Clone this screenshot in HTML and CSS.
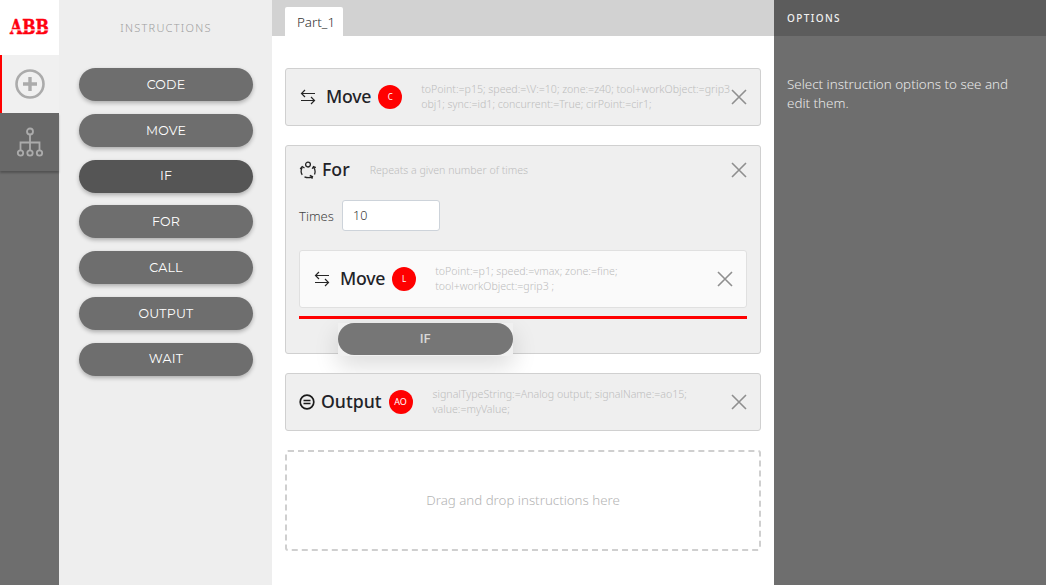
FILE: index.html
```html
<!DOCTYPE html>
<html lang="en">
<head>
<meta charset="utf-8">
<title>Instructions</title>
<link rel="stylesheet" href="styles.css">
</head>
<body>
<div class="app">
  <nav class="rail">
    <div class="logo"><span class="logo-text">ABB</span></div>
    <div class="rail-tab rail-active">
      <svg width="32" height="32" viewBox="0 0 32 32" fill="none" stroke="#ababab"><circle cx="16" cy="16" r="13.5" stroke-width="2.6"/><path d="M16 9v14M9 16h14" stroke-width="3.4"/></svg>
    </div>
    <div class="rail-tab rail-idle">
      <svg width="30" height="32" viewBox="0 0 30 32" fill="none" stroke="#ababab" stroke-width="1.8"><circle cx="15" cy="5.5" r="3"/><path d="M15 8.5v8M5.5 24.5v-8h19v8M15 16.5v8"/><circle cx="5.5" cy="27" r="2.7"/><circle cx="15" cy="27" r="2.7"/><circle cx="24.5" cy="27" r="2.7"/></svg>
    </div>
  </nav>

  <aside class="palette">
    <h2 class="palette-title">INSTRUCTIONS</h2>
    <div class="palette-list">
      <button class="pill">CODE</button>
      <button class="pill">MOVE</button>
      <button class="pill pill-dark">IF</button>
      <button class="pill">FOR</button>
      <button class="pill">CALL</button>
      <button class="pill">OUTPUT</button>
      <button class="pill">WAIT</button>
    </div>
  </aside>

  <main class="editor">
    <div class="tabbar"><div class="tab">Part_1</div></div>
    <div class="flow">
      <section class="card">
        <div class="row">
          <svg class="ico ico-move" width="16" height="16" viewBox="0 0 16 16" fill="none" stroke="#262626" stroke-width="1.2"><path d="M15 4.500H1.500M5 1L1.500 4.500 5 8M1 11.500h13.500M11 8l3.500 3.500L11 15"/></svg>
          <span class="name name-move">Move</span>
          <span class="badge">C</span>
          <p class="params">toPoint:=p15; speed:=\V:=10; zone:=z40; tool+workObject:=grip3<br>obj1; sync:=id1; concurrent:=True; cirPoint:=cir1;</p>
          <svg class="close" width="16" height="16" viewBox="0 0 16 16" stroke="#8f8f8f" stroke-width="1.6"><path d="M1 1l14 14M15 1L1 15"/></svg>
        </div>
      </section>

      <section class="card card-for">
        <div class="for-head">
          <svg class="ico ico-for" width="18" height="18" viewBox="0 0 18 18" fill="none" stroke="#262626" stroke-width="1.3"><circle cx="9" cy="3.600" r="2.400"/><path d="M3.200 6.500C1.800 9 2 12 3.200 13.800M1.200 8L3.200 5.500 5.500 7M5.500 15.800C8 17 10.500 17 13 15.800M10.800 14.300L13.500 15.600 12.800 17.800M15.500 13.500C16.500 11 16.300 8.500 14.500 6.200M13.200 7.800L14.500 5.500 16.800 6.600"/></svg>
          <span class="name">For</span>
          <span class="for-desc">Repeats a given number of times</span>
          <svg class="close" width="16" height="16" viewBox="0 0 16 16" stroke="#8f8f8f" stroke-width="1.6"><path d="M1 1l14 14M15 1L1 15"/></svg>
        </div>
        <div class="times">
          <label class="times-label">Times</label>
          <div class="times-input">10</div>
        </div>
        <div class="card card-inner">
          <div class="row">
            <svg class="ico ico-move" width="16" height="16" viewBox="0 0 16 16" fill="none" stroke="#262626" stroke-width="1.2"><path d="M15 4.500H1.500M5 1L1.500 4.500 5 8M1 11.500h13.500M11 8l3.500 3.500L11 15"/></svg>
            <span class="name name-move">Move</span>
            <span class="badge">L</span>
            <p class="params">toPoint:=p1; speed:=vmax; zone:=fine;<br>tool+workObject:=grip3 ;</p>
            <svg class="close" width="16" height="16" viewBox="0 0 16 16" stroke="#8f8f8f" stroke-width="1.6"><path d="M1 1l14 14M15 1L1 15"/></svg>
          </div>
        </div>
        <div class="drop-line"></div>
        <div class="ghost"><div class="pill ghost-pill">IF</div></div>
      </section>

      <section class="card">
        <div class="row">
          <svg class="ico ico-out" width="16" height="16" viewBox="0 0 16 16" fill="none" stroke="#1a1a1a"><circle cx="8" cy="8" r="6.800" stroke-width="1.700"/><path d="M4.500 6.500h7M4.500 9.500h7" stroke-width="1.500"/></svg>
          <span class="name">Output</span>
          <span class="badge badge-ao">AO</span>
          <p class="params params-wide">signalTypeString:=Analog output; signalName:=ao15;<br>value:=myValue;</p>
          <svg class="close" width="16" height="16" viewBox="0 0 16 16" stroke="#8f8f8f" stroke-width="1.6"><path d="M1 1l14 14M15 1L1 15"/></svg>
        </div>
      </section>

      <div class="dropzone">Drag and drop instructions here</div>
    </div>
  </main>

  <aside class="options">
    <div class="options-head">OPTIONS</div>
    <p class="options-text">Select instruction options to see and edit them.</p>
  </aside>
</div>
</body>
</html>
```
FILE: styles.css
```css
* { box-sizing: border-box; }
html, body { margin: 0; height: 100%; overflow: hidden; }
body { font-family: "Noto Sans", "Open Sans", sans-serif; color: #262626; }
.app { display: flex; width: 1046px; height: 585px; }

.rail { width: 59px; background: #6e6e6e; flex: none; }
.logo { height: 55px; background: #fff; display: flex; align-items: center; justify-content: center; }
.logo-text { position: relative; display: inline-block; font-family: "DejaVu Serif", serif; font-weight: 700; font-size: 15.8px; line-height: 16px; color: #ff000f; -webkit-text-stroke: 0.4px #ff000f; transform: scaleY(1.25); margin-top: 1px; }
.logo-text::after { content: ""; position: absolute; inset: 0; background: linear-gradient(rgba(255,255,255,.8), rgba(255,255,255,.8)) 0 8.5px / 100% 1px no-repeat; }
.rail-tab { height: 58px; display: flex; align-items: center; justify-content: center; }
.rail-active { background: #f0f0f0; border-left: 2px solid #f00; }
.rail-active svg { margin-right: 2px; }
.rail-idle { background: #686868; box-shadow: 0 2px 2px rgba(0,0,0,.25); position: relative; }

.palette { width: 213px; background: #eeeeee; flex: none; padding: 0 19px 0 20px; }
.palette-title { margin: 0; height: 68px; padding-top: 20px; text-align: center; font-weight: 300; font-size: 11px; line-height: 16px; letter-spacing: 1.25px; color: #a0a0a0; }
.palette-list { display: flex; flex-direction: column; gap: 12.75px; }
.pill { display: block; width: 174px; height: 33px; border: 0; border-radius: 17px; background: #6e6e6e; color: #fff; font-family: "Montserrat", "Inter", sans-serif; font-size: 12.6px; font-weight: 400; line-height: 32px; padding: 0.6px 0 0; text-align: center; letter-spacing: .2px; box-shadow: 0 2px 4px rgba(0,0,0,.28); }
.pill-dark { background: #555; }

.editor { width: 502px; flex: none; background: #fff; }
.tabbar { height: 36px; background: #d2d2d2; padding: 7px 0 0 13px; }
.tab { width: 58px; height: 29px; padding-left: 4px; background: #fff; font-size: 13.4px; font-weight: 300; line-height: 30px; text-align: center; color: #333; border-radius: 2px 2px 0 0; }
.flow { padding: 32px 13px 0; display: flex; flex-direction: column; gap: 19px; }

.card { background: #efefef; border: 1px solid #d0d0d0; border-radius: 3px; height: 58px; position: relative; }
.row { display: flex; align-items: center; height: 56px; padding: 0 13px; }
.card-for { height: 209px; padding: 0 13px; }
.card-inner { background: #fafafa; border-color: #e0e0e0; height: 58px; width: 448px; }
.ico { flex: none; }
.ico-move { margin-right: 10px; margin-left: 1px; }
.ico-out { margin-right: 6px; }
.name { font-family: "Noto Sans", sans-serif; font-size: 17.7px; font-weight: 500; color: #1f2328; line-height: 24px; flex: none; position: relative; top: -1px; }
.name-move { letter-spacing: -0.25px; }
.badge { flex: none; width: 24px; height: 24px; border-radius: 50%; background: #f00; color: #fff; font-size: 8px; line-height: 24px; text-align: center; margin-left: 7px; }
.badge-ao { font-size: 9px; }
.params { margin: 0 0 0 19px; flex: 1; font-size: 10.6px; font-weight: 300; line-height: 15px; color: #bdbdbd; white-space: nowrap; min-width: 0; }
.params-wide { margin-left: 20px; }
.close { flex: none; margin-left: 1px; }

.for-head { display: flex; align-items: center; height: 48px; }
.ico-for { margin-right: 5px; }
.for-desc { flex: 1; margin-left: 20px; font-size: 10.6px; font-weight: 300; color: #bdbdbd; }
.times { display: flex; align-items: center; height: 31px; margin: 6px 0 19px; }
.times-label { font-size: 13px; font-weight: 300; color: #444; margin-right: 7px; width: 36px; }
.times-input { width: 98px; height: 31px; background: #fff; border: 1px solid #cdd3da; border-radius: 3px; padding-left: 10px; font-size: 12.5px; font-weight: 300; line-height: 29px; color: #333; }
.drop-line { height: 3px; background: #f00; margin-top: 8px; width: 448px; }
.ghost { position: absolute; left: 52px; top: 177px; width: 175px; height: 33px; background: #f0f0f0; box-shadow: 0 10px 24px rgba(0,0,0,.14); }
.ghost-pill { width: 100%; height: 32px; background: #767676; color: #d8d8d8; font-weight: 600; font-family: "Inter", sans-serif; font-size: 12px; box-shadow: none; line-height: 32px; padding: 0; }

.dropzone { height: 101px; border: 2px dashed #cfcfcf; border-radius: 3px; display: flex; align-items: center; justify-content: center; font-size: 13.3px; font-weight: 300; color: #b4b4b4; padding-bottom: 1px; }

.options { flex: 1; background: #6e6e6e; }
.options-head { height: 36px; background: #5c5c5c; padding-left: 13px; font-size: 10px; line-height: 36px; letter-spacing: 1.4px; color: #f0f0f0; font-weight: 500; }
.options-text { margin: 39px 20px 0 13px; font-size: 13.4px; font-weight: 300; line-height: 19px; color: #e8e8e8; }
```
